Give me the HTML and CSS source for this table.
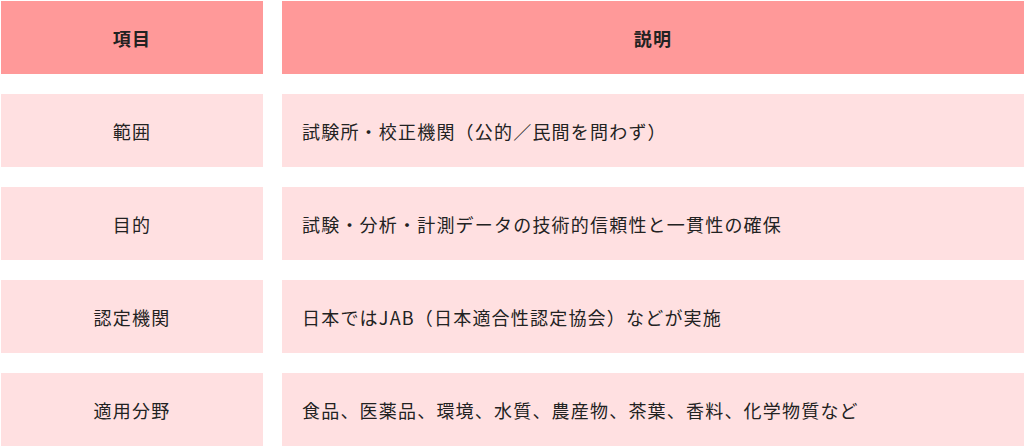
FILE: index.html
```html
<!DOCTYPE html>
<html lang="ja">
<head>
<meta charset="utf-8">
<link rel="stylesheet" href="styles.css">
</head>
<body>
<div class="table">
  <div class="cell head">項目</div>
  <div class="cell head">説明</div>
  <div class="cell key">範囲</div>
  <div class="cell val">試験所・校正機関（公的／民間を問わず）</div>
  <div class="cell key">目的</div>
  <div class="cell val">試験・分析・計測データの技術的信頼性と一貫性の確保</div>
  <div class="cell key">認定機関</div>
  <div class="cell val">日本ではJAB（日本適合性認定協会）などが実施</div>
  <div class="cell key">適用分野</div>
  <div class="cell val">食品、医薬品、環境、水質、農産物、茶葉、香料、化学物質など</div>
</div>
</body>
</html>
```
FILE: styles.css
```css
html, body {
  margin: 0;
  padding: 0;
  background: #ffffff;
}
.table {
  display: grid;
  grid-template-columns: 262px 742px;
  grid-auto-rows: 73px;
  column-gap: 19px;
  row-gap: 20px;
  padding: 1px 0 0 1px;
  font-family: "Noto Sans CJK JP", "Noto Sans", sans-serif;
  font-size: 18px;
  letter-spacing: 1.2px;
  color: #222222;
}
.cell {
  display: flex;
  align-items: center;
  background: #ffe0e1;
  box-sizing: border-box;
}
.head {
  background: #ff9999;
  justify-content: center;
  font-weight: bold;
}
.key {
  justify-content: center;
}
.val {
  padding-left: 20px;
}
```
